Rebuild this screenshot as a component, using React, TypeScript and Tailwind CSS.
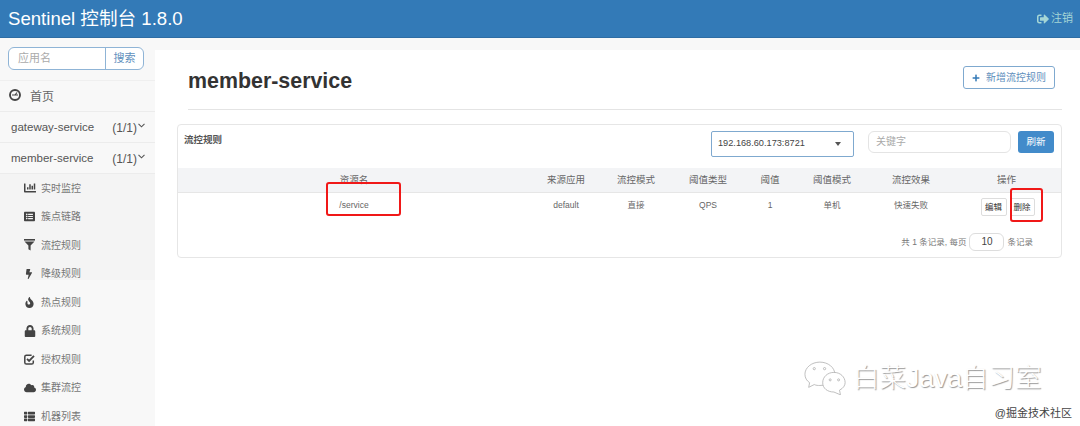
import React from 'react';
import {
  FaBolt,
  FaChartBar,
  FaCloud,
  FaFire,
  FaListAlt,
  FaLock,
  FaPlus,
  FaSignOutAlt,
  FaThList,
} from 'react-icons/fa';

const SANS = 'font-["Liberation_Sans","Noto_Sans_CJK_SC",sans-serif]';

function FunnelIcon() {
  return (
    <svg width="11" height="12" viewBox="0 0 11 12" fill="currentColor">
      <rect x="0" y="0" width="11" height="1.6" />
      <path d="M0.5 2.6 H10.5 L6.6 6.6 V11.5 L4.4 10.2 V6.6 Z" />
    </svg>
  );
}

function CheckIcon() {
  return (
    <svg width="11" height="11" viewBox="0 0 11 11" fill="none" stroke="currentColor" strokeWidth="1.5">
      <path d="M9.3 6.5 V8.4 Q9.3 10 7.7 10 H2.4 Q0.8 10 0.8 8.4 V2.8 Q0.8 1.2 2.4 1.2 H7.6" />
      <path d="M3 4.8 L5.1 6.9 L10 1.8" strokeWidth="1.8" />
    </svg>
  );
}

const subMenu = [
  { label: '实时监控', icon: <FaChartBar size={12} /> },
  { label: '簇点链路', icon: <FaListAlt size={11} /> },
  { label: '流控规则', icon: <FunnelIcon /> },
  { label: '降级规则', icon: <FaBolt size={10} /> },
  { label: '热点规则', icon: <FaFire size={11} /> },
  { label: '系统规则', icon: <FaLock size={12} /> },
  { label: '授权规则', icon: <CheckIcon /> },
  { label: '集群流控', icon: <FaCloud size={12} /> },
  { label: '机器列表', icon: <FaThList size={11} /> },
];

const columns = ['资源名', '来源应用', '流控模式', '阈值类型', '阈值', '阈值模式', '流控效果', '操作'];
const row = ['/service', 'default', '直接', 'QPS', '1', '单机', '快速失败'];
const gridCols = 'grid grid-cols-[352px_72px_68px_76px_48px_76px_82px_1fr]';

function Chevron() {
  return (
    <svg width="7" height="5" viewBox="0 0 7 5" className="ml-[1px] mb-[5px]" fill="none" stroke="#555" strokeWidth="1.1">
      <path d="M0.5 0.8 L3.5 3.8 L6.5 0.8" />
    </svg>
  );
}

function AppRow({ name }: { name: string }) {
  return (
    <div className="h-[31px] flex items-center justify-between pl-[11px] pr-[10px] pt-[1px] border-b border-[#ececec] text-[12px] text-[#555]">
      <span className="text-[11.5px]">{name}</span>
      <span className="flex items-center">
        (1/1)
        <Chevron />
      </span>
    </div>
  );
}

function Sidebar() {
  return (
    <aside className="w-[155px] shrink-0 bg-[#f8f8f8]">
      <div className="h-[43px] pt-[9px] pl-[8px] border-b border-[#efefef]">
        <div className="flex w-[136px] h-[23px] border border-[#8fb4d6] rounded-[6px] overflow-hidden bg-white text-[11px]">
          <span className="flex-1 pl-[9px] leading-[20px] text-[#aaa]">应用名</span>
          <span className="w-[38px] border-l border-[#8fb4d6] text-center leading-[21px] text-[#5f8fbd]">搜索</span>
        </div>
      </div>
      <div className="h-[31px] flex items-center pl-[9px] border-b border-[#ececec] text-[12px] text-[#666]">
        <svg width="12" height="12" viewBox="0 0 12 12" className="mr-[9px] mb-[3px]">
          <circle cx="6" cy="6" r="5" fill="none" stroke="#444" strokeWidth="1.9" />
          <path d="M3 6 H9 M6 6 L8 3.5" stroke="#444" strokeWidth="1.2" />
        </svg>
        <span className="pt-[1px]">首页</span>
      </div>
      <AppRow name="gateway-service" />
      <AppRow name="member-service" />
      <div className="bg-[linear-gradient(#f4f4f4_106px,transparent_106px)]">
        {subMenu.map((item) => (
          <div key={item.label} className="h-[28.5px] flex items-center pl-[24px] text-[10px] text-[#777]">
            <span className="w-[17px] text-[#444] flex items-center">{item.icon}</span>
            {item.label}
          </div>
        ))}
      </div>
    </aside>
  );
}

function RulesCard() {
  return (
    <section className="border border-[#e6e6e6] rounded-[4px] bg-white">
      <div className="h-[43px] flex items-start pt-[6px] pr-[7px]">
        <h3 className="pl-[6px] pt-[1px] text-[9.5px] font-bold text-[#555] leading-[16px] flex-1">流控规则</h3>
        <div className="w-[143px] h-[26px] flex items-center justify-between px-[6px] border border-[#7fa9cf] rounded-[2px] text-[9.2px] text-[#444]">
          192.168.60.173:8721
          <span className="mr-[6px] border-x-[3.5px] border-x-transparent border-t-[4px] border-t-[#555]" />
        </div>
        <div className="ml-[14px] w-[143px] h-[22px] border border-[#e4e4e4] rounded-[6px] pl-[7px] text-[10px] leading-[19px] text-[#aaa]">
          关键字
        </div>
        <button className="ml-[7px] w-[36px] h-[22px] rounded-[3px] bg-[#428bca] text-[9.5px] text-white">刷新</button>
      </div>
      <div className={`${gridCols} h-[25px] items-center bg-[#f3f4f6] border-b border-[#e6e6e6] text-[9.5px] text-[#666] text-center`}>
        {columns.map((c) => (
          <span key={c}>{c}</span>
        ))}
      </div>
      <div className={`${gridCols} h-[40px] text-[8.5px] text-[#666] text-center`}>
        {row.map((c) => (
          <span key={c} className="pt-[6px]">
            {c}
          </span>
        ))}
        <div className="flex justify-center gap-[3px] pt-[5px] pl-[2px]">
          <button className="w-[26px] h-[18px] border border-[#ddd] rounded-[2px] bg-white text-[8.5px] text-[#333]">编辑</button>
          <button className="w-[25px] h-[18px] border border-[#ddd] rounded-[2px] bg-white text-[8.5px] text-[#333]">删除</button>
        </div>
      </div>
      <div className="h-[24px] flex justify-end items-start pr-[28px] text-[8.5px] text-[#777]">
        <span className="leading-[18px]">共 1 条记录, 每页</span>
        <span className="mx-[3px] w-[35px] h-[18px] border border-[#ddd] rounded-[6px] text-center text-[10px] leading-[16px] text-[#444]">10</span>
        <span className="leading-[18px]">条记录</span>
      </div>
    </section>
  );
}

export default function App() {
  return (
    <div className={`relative w-[1080px] h-[426px] overflow-hidden flex flex-col bg-white ${SANS}`}>
      <header className="h-[38px] shrink-0 flex items-center justify-between pl-[8px] pr-[7px] bg-[#337ab7] border-b border-[#2e6da4]">
        <span className="text-[18.6px] text-white">Sentinel 控制台 1.8.0</span>
        <span className="flex items-center gap-[2px] text-[11px] text-[#a5d6d6]">
          <FaSignOutAlt size={12} />
          注销
        </span>
      </header>
      <div className="flex flex-1 min-h-0">
        <Sidebar />
        <main className="flex-1 flex flex-col bg-[#f8f8f8]">
          <div className="mt-[12px] flex-1 bg-white pl-[22px] pr-[18px]">
            <div className="h-[60px] ml-[11px] flex items-start justify-between border-b border-[#e4e4e4]">
              <h1 className="mt-[18px] text-[21.4px] leading-[26px] font-bold text-[#333]">member-service</h1>
              <button className="mt-[16px] mr-[7px] w-[92px] h-[23px] flex items-center justify-center gap-[6px] border border-[#7fa9cf] rounded-[3px] text-[10px] text-[#5f8fbd]">
                <FaPlus size={8} className="text-[#337ab7]" />
                新增流控规则
              </button>
            </div>
            <div className="mt-[14px]">
              <RulesCard />
            </div>
          </div>
        </main>
      </div>

      {/* red annotation boxes */}
      <div className="absolute left-[326px] top-[182px] w-[75px] h-[34px] border-[2px] border-[#f01818] rounded-[3px]" />
      <div className="absolute left-[1010px] top-[188px] w-[33px] h-[34px] border-[2px] border-[#f01818] rounded-[3px]" />

      {/* watermark */}
      <div className="absolute left-[804px] top-[361px] flex items-center gap-[6px] text-[26.5px] leading-[32px] font-light text-white [text-shadow:1px_1px_1px_#999]">
        <svg width="43" height="34" viewBox="0 0 46 36" fill="white" stroke="#aaa" strokeWidth="0.8">
          <path d="M17 1 C8 1 1 7 1 14 C1 18 3 21 6 23 L5 28 L11 25 C13 26 15 26 17 26 C26 26 33 20 33 14 C33 7 26 1 17 1 Z" />
          <path d="M32 12 C25 12 20 17 20 23 C20 29 25 33 32 33 L39 36 L38 31 C42 29 44 26 44 23 C44 17 39 12 32 12 Z" />
          <circle cx="11" cy="8" r="1.2" />
          <circle cx="22" cy="8" r="1.2" />
          <circle cx="28" cy="20" r="1.1" />
          <circle cx="37" cy="20" r="1.1" />
        </svg>
        白菜Java自习室
      </div>
      <div className="absolute right-[8px] top-[406px] text-[11px] leading-[14px] text-[#444] [text-shadow:0_0_1px_#fff]">@掘金技术社区</div>
    </div>
  );
}
